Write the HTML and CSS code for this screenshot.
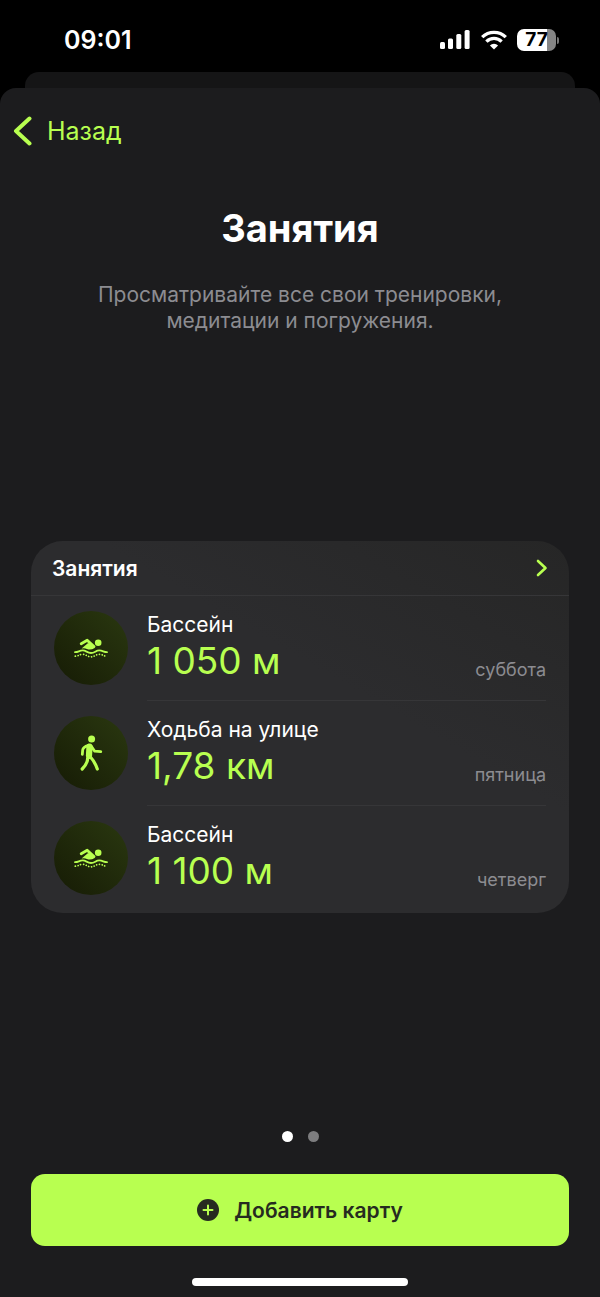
FILE: index.html
```html
<!DOCTYPE html>
<html lang="ru">
<head>
<meta charset="utf-8">
<meta name="viewport" content="width=device-width, initial-scale=1">
<title>Занятия</title>
<link rel="stylesheet" href="styles.css">
</head>
<body>
<svg class="symbols" aria-hidden="true">
  <symbol id="swim" viewBox="0 0 34 20">
    <circle cx="24.200" cy="4.700" r="3.300" fill="currentColor"/>
    <path d="M7.200 5.800 13.200 2.300 20 8.600" fill="none" stroke="currentColor" stroke-width="2.800" stroke-linecap="round" stroke-linejoin="round"/>
    <path d="M13.800 5.300 7.600 10.600Q10.300 9.700 13 11.100 16.500 12.500 20.700 10.100L17.500 5.100Z" fill="currentColor"/>
    <path d="M1 14.200C4.500 14.200 5.200 12.400 8.700 12.400S13 15 17 15 21.500 12.400 25.200 12.400 29.500 14.200 33 14.200" fill="none" stroke="currentColor" stroke-width="1.800" stroke-linecap="round"/>
    <path d="M1.300 18.200C4.500 18.200 5.200 16.300 8.700 16.300S13 18.800 17 18.800 21.500 16.300 25.200 16.300 29.500 18.200 32.700 18.200" fill="none" stroke="currentColor" stroke-width="1.700" stroke-linecap="round" stroke-dasharray="0.100 2.700"/>
  </symbol>
  <symbol id="walk" viewBox="0 0 24 37">
    <circle cx="12.600" cy="4" r="3.500" fill="currentColor"/>
    <path d="M10.500 11.500 10 20.500" fill="none" stroke="currentColor" stroke-width="6.200" stroke-linecap="round"/>
    <path d="M9.500 10.300Q4 12 3.700 14.800L3.300 19.300M12.500 11.600 15.700 16.200 21.800 16.600" fill="none" stroke="currentColor" stroke-width="2.800" stroke-linecap="round" stroke-linejoin="round"/>
    <path d="M8.800 22.500Q8.700 28.500 3.200 34M11 21.500Q16 27 18.300 34" fill="none" stroke="currentColor" stroke-width="3.200" stroke-linecap="round"/>
  </symbol>
</svg>
<div class="screen">
  <header class="status">
    <time class="clock">09:01</time>
    <div class="indicators">
      <svg width="31" height="20" viewBox="0 0 31 20" fill="#fff" role="img" aria-label="Сигнал"><rect x="0" y="12" width="5" height="7" rx="1.500"/><rect x="8" y="8.500" width="5" height="10.500" rx="1.500"/><rect x="16.300" y="4" width="5" height="15" rx="1.500"/><rect x="24.600" y="0" width="5" height="19" rx="1.500"/></svg>
      <svg width="26" height="20" viewBox="0 0 26 20" fill="none" stroke="#fff" stroke-width="3.300" role="img" aria-label="Wi-Fi"><path d="M1.200 7.200a16.600 16.600 0 0 1 23.600 0M5.400 11.600a10.700 10.700 0 0 1 15.200 0"/><path d="M13 19.500 8.900 15.400a5.900 5.900 0 0 1 8.200 0Z" fill="#fff" stroke="none"/></svg>
      <div class="battery"><span class="charge">77</span><span class="tip"></span></div>
    </div>
  </header>
  <div class="sheet-behind"></div>
  <main class="sheet">
    <nav class="nav">
      <button class="back" type="button">
        <svg width="19" height="30" viewBox="0 0 19 30" fill="none" stroke="currentColor" stroke-width="4" stroke-linecap="round" stroke-linejoin="round" aria-hidden="true"><path d="M16.500 2.500 3 15l13.500 12.500"/></svg>
        Назад
      </button>
    </nav>
    <section class="intro">
      <h1 class="title">Занятия</h1>
      <p class="subtitle">Просматривайте все свои тренировки, медитации и погружения.</p>
    </section>
    <section class="card">
      <button class="card-head" type="button">
        Занятия
        <svg width="12" height="18" viewBox="0 0 12 18" fill="none" stroke="#b8ff50" stroke-width="2.600" stroke-linecap="round" stroke-linejoin="round" aria-hidden="true"><path d="M2 2l7.500 7L2 16"/></svg>
      </button>
      <ul class="list">
        <li class="row">
          <span class="badge"><svg width="34" height="20" aria-hidden="true"><use href="#swim"/></svg></span>
          <div class="body"><div><div class="kind">Бассейн</div><div class="value">1 050 м</div></div><span class="day">суббота</span></div>
        </li>
        <li class="row">
          <span class="badge"><svg width="24" height="37" aria-hidden="true"><use href="#walk"/></svg></span>
          <div class="body"><div><div class="kind">Ходьба на улице</div><div class="value">1,78 км</div></div><span class="day">пятница</span></div>
        </li>
        <li class="row">
          <span class="badge"><svg width="34" height="20" aria-hidden="true"><use href="#swim"/></svg></span>
          <div class="body"><div><div class="kind">Бассейн</div><div class="value">1 100 м</div></div><span class="day">четверг</span></div>
        </li>
      </ul>
    </section>
    <footer class="footer">
      <div class="dots"><span class="dot current"></span><span class="dot"></span></div>
      <button class="add" type="button">
        <svg width="22" height="22" viewBox="0 0 22 22" aria-hidden="true"><circle cx="11" cy="11" r="11" fill="#262b20"/><path d="M11 6.500v9M6.500 11h9" stroke="#b8ff50" stroke-width="2" stroke-linecap="round"/></svg>
        Добавить карту
      </button>
      <div class="home"></div>
    </footer>
  </main>
</div>
</body>
</html>
```
FILE: styles.css
```css
* {
  box-sizing: border-box;
}

body {
  margin: 0;
  background: #000;
  color: #fff;
  font-family: Inter, "Liberation Sans", sans-serif;
}

button {
  border: 0;
  padding: 0;
  background: none;
  color: inherit;
  font: inherit;
  cursor: pointer;
}

svg {
  flex: none;
}

.symbols {
  position: absolute;
  width: 0;
  height: 0;
}

.screen {
  display: flex;
  flex-direction: column;
  min-height: 100vh;
}

.status {
  display: flex;
  align-items: center;
  justify-content: space-between;
  height: 72px;
  padding: 8px 41px 0 64px;
}

.clock {
  font-size: 25px;
  font-weight: 600;
}

.indicators {
  display: flex;
  align-items: center;
  gap: 10px;
}

.battery {
  display: flex;
  align-items: center;
  gap: 1px;
}

.charge {
  width: 39px;
  border-radius: 7px;
  background: linear-gradient(90deg, #fff 77%, #858585 77%);
  color: #000;
  font-size: 19px;
  font-weight: 700;
  line-height: 22px;
  text-align: center;
}

.tip {
  width: 2px;
  height: 7px;
  border-radius: 0 2px 2px 0;
  background: #777;
}

.sheet-behind {
  height: 32px;
  margin: 0 25px -16px;
  border-radius: 14px 14px 0 0;
  background: #151516;
}

.sheet {
  display: flex;
  flex: 1;
  flex-direction: column;
  border-radius: 16px 16px 0 0;
  background: #1c1c1e;
}

.nav {
  padding: 27px 13px 0;
}

.back {
  display: flex;
  align-items: center;
  gap: 15px;
  color: #b8ff50;
  font-size: 25px;
  line-height: 32px;
}

.intro {
  padding: 56px 80px 0;
  text-align: center;
}

.title {
  margin: 0;
  font-size: 38px;
  font-weight: 700;
  line-height: 50px;
}

.subtitle {
  margin: 29px 0 0;
  color: #8c8c91;
  font-size: 21px;
  line-height: 26px;
}

.card {
  margin: 207px 31px 0;
  overflow: hidden;
  border-radius: 32px;
  background: linear-gradient(30deg, #2c2c2e 60%, #262626);
}

.card-head {
  display: flex;
  align-items: center;
  justify-content: space-between;
  width: 100%;
  height: 55px;
  padding: 0 21px;
  border-bottom: 1px solid #363638;
  font-size: 21px;
  font-weight: 600;
}

.list {
  margin: 0;
  padding: 0 0 2px;
  list-style: none;
}

.row {
  display: flex;
  gap: 19px;
  padding: 0 23px;
}

.badge {
  display: flex;
  align-items: center;
  justify-content: center;
  width: 74px;
  height: 74px;
  margin: 15px 0 16px;
  border-radius: 50%;
  background: linear-gradient(45deg, #161b05, #2a3810);
  color: #b8ff50;
}

.body {
  display: flex;
  flex: 1;
  align-items: flex-end;
  justify-content: space-between;
  padding: 16px 0 18px;
  border-bottom: 1px solid #363638;
}

.row:last-child .body {
  border-bottom-color: transparent;
}

.kind {
  font-size: 21px;
  line-height: 26px;
}

.value {
  color: #b8ff50;
  font-size: 37px;
  line-height: 46px;
  margin-bottom: -2px;
}

.day {
  color: #8c8c91;
  font-size: 18px;
  line-height: 24px;
}

.footer {
  display: flex;
  flex-direction: column;
  margin-top: auto;
  padding: 40px 31px 11px;
}

.dots {
  display: flex;
  justify-content: center;
  gap: 15px;
  margin-bottom: 32px;
}

.dot {
  width: 11px;
  height: 11px;
  border-radius: 50%;
  background: #7d7d7f;
}

.current {
  background: #fff;
}

.add {
  display: flex;
  align-items: center;
  justify-content: center;
  gap: 15px;
  height: 72px;
  border-radius: 14px;
  background: #b8ff50;
  color: #262b20;
  font-size: 21px;
  font-weight: 600;
}

.home {
  align-self: center;
  width: 40%;
  height: 8px;
  margin-top: 32px;
  border-radius: 4px;
  background: #fff;
}
```
